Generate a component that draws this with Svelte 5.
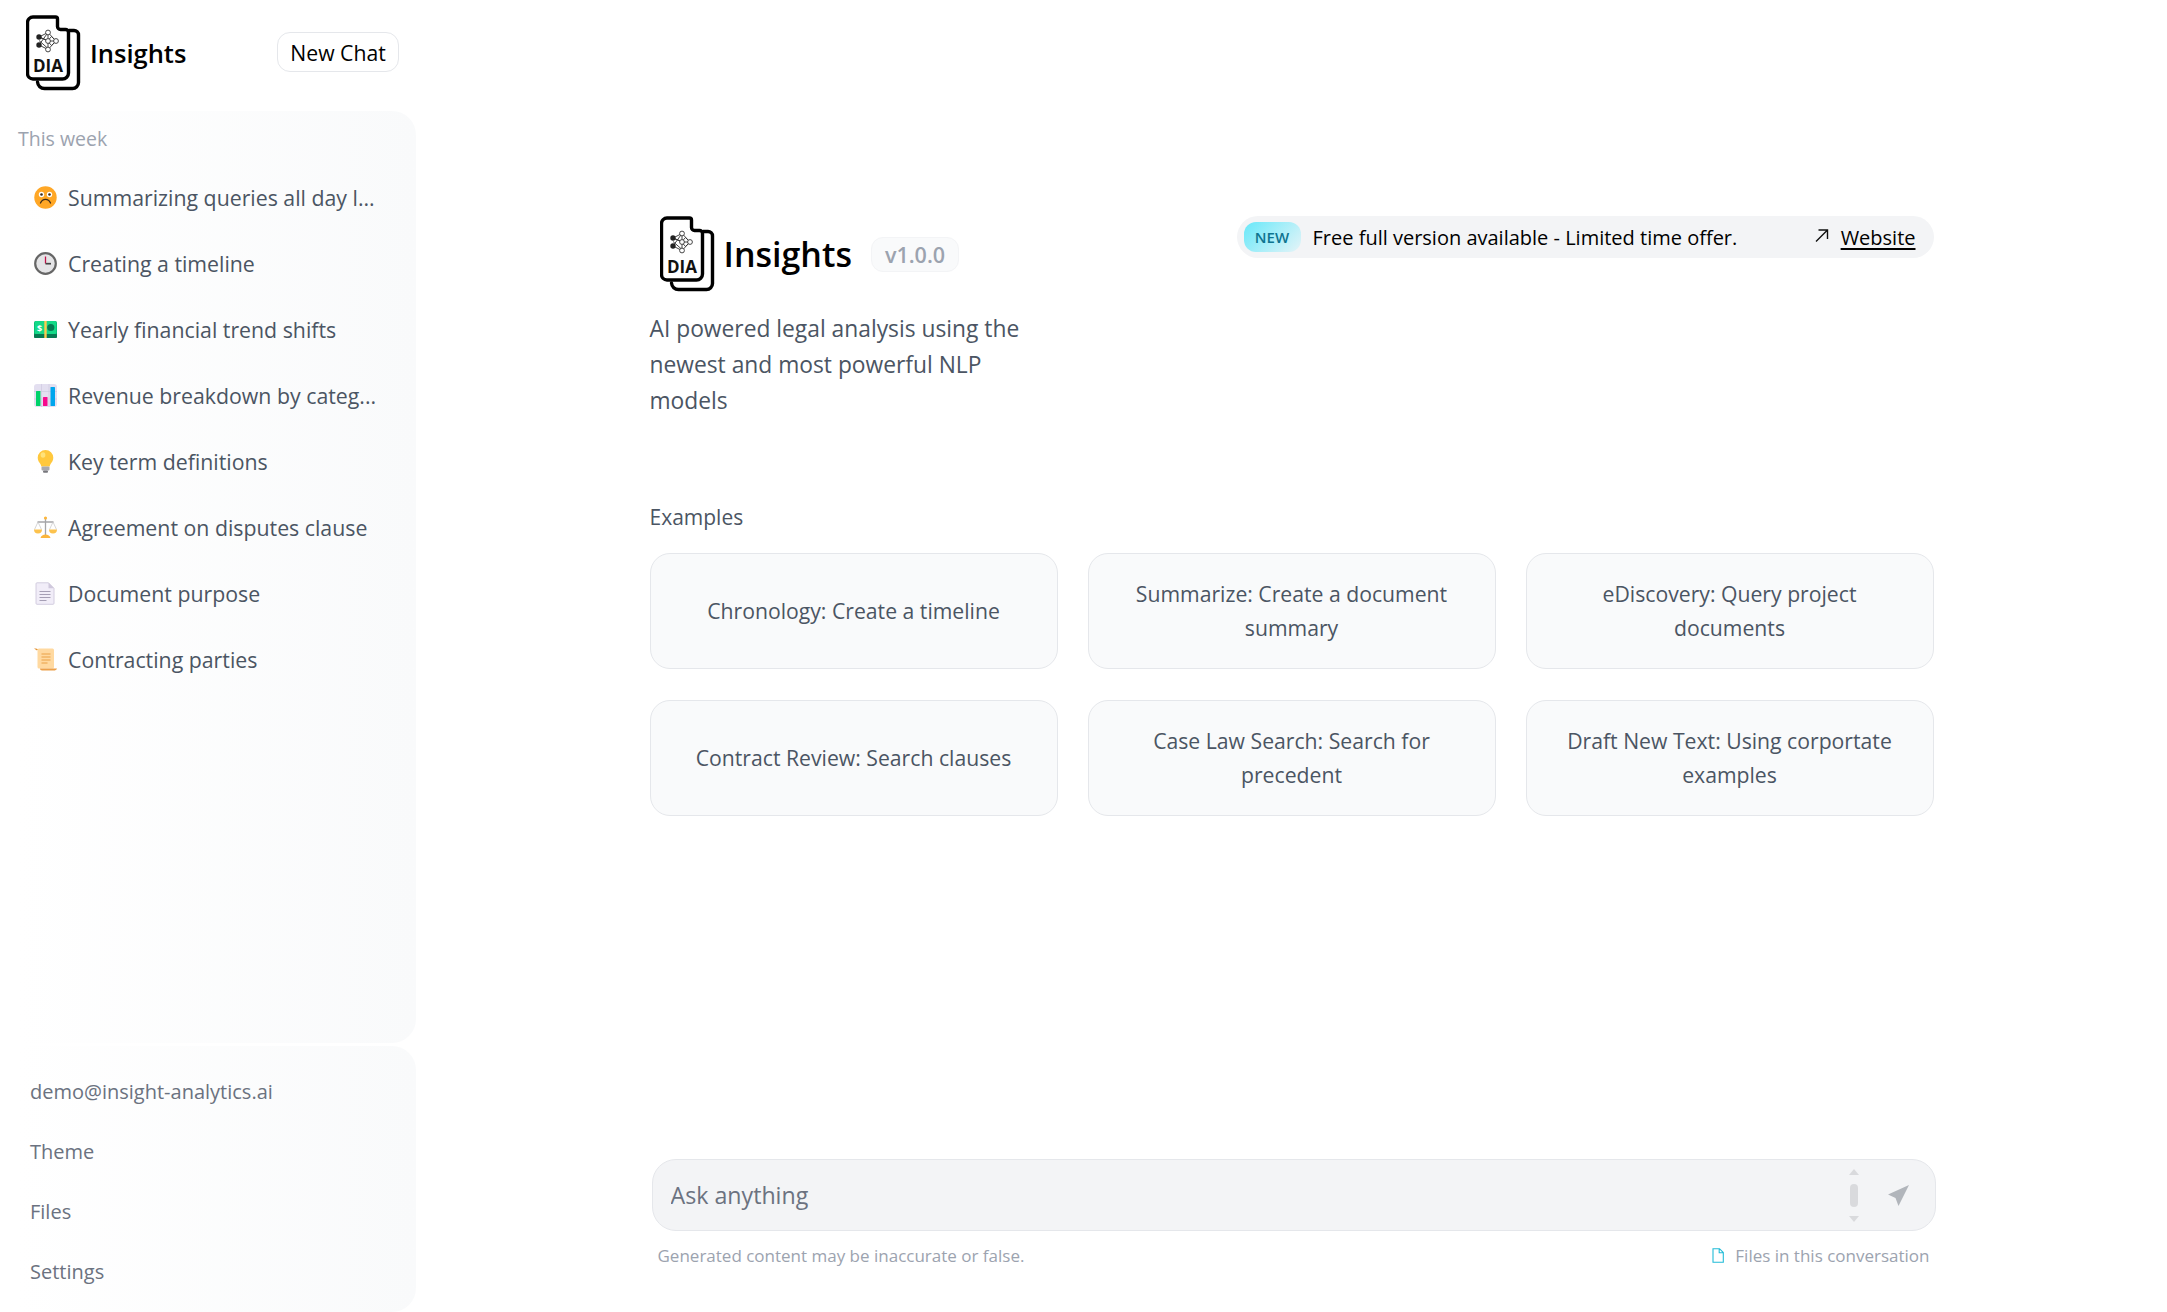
<script>
  const chats = [
    { icon: 'frown', label: 'Summarizing queries all day l...' },
    { icon: 'clock', label: 'Creating a timeline' },
    { icon: 'money', label: 'Yearly financial trend shifts' },
    { icon: 'chart', label: 'Revenue breakdown by categ...' },
    { icon: 'bulb', label: 'Key term definitions' },
    { icon: 'scales', label: 'Agreement on disputes clause' },
    { icon: 'page', label: 'Document purpose' },
    { icon: 'scroll', label: 'Contracting parties' }
  ]

  const examples = [
    'Chronology: Create a timeline',
    'Summarize: Create a document summary',
    'eDiscovery: Query project documents',
    'Contract Review: Search clauses',
    'Case Law Search: Search for precedent',
    'Draft New Text: Using corportate examples'
  ]

  const accountLinks = ['demo@insight-analytics.ai', 'Theme', 'Files', 'Settings']
</script>

{#snippet logo()}
  <svg class="logo" viewBox="0 0 56 76" aria-hidden="true">
    <path d="M43 15.5h5a4.500 4.500 0 0 1 4.500 4.500V67.500a6 6 0 0 1-6 6H18.500a7 7 0 0 1-7-6.500" fill="none" stroke="#000" stroke-width="3.400" stroke-linecap="round" />
    <path d="M7 2h22.500a2 2 0 0 1 2 2v7.500a3 3 0 0 0 3 3h5a3 3 0 0 1 3 3V58a6 6 0 0 1-6 6H7a5.500 5.500 0 0 1-5.500-5.500V7.500A5.500 5.500 0 0 1 7 2z" fill="#fff" stroke="#000" stroke-width="3.400" stroke-linejoin="round" />
    <g fill="none" stroke="#333" stroke-width="0.900">
      <path d="M13 22l9-4.500 0 8-9-3.500 9 4 0 7.500-9-8M13 30l9-12.500M13 30l9 4.500M22 17.500l8 8.500-8 8.500M22 26h8M25.500 21.500l4.500 4.500-4.500 4.500-4-4.500z" />
      <circle cx="22" cy="17.500" r="2.400" fill="#fff" />
      <circle cx="22" cy="26" r="2.400" fill="#fff" />
      <circle cx="22" cy="34.500" r="2.400" fill="#fff" />
      <circle cx="30" cy="26" r="2.400" fill="#fff" />
    </g>
    <circle cx="13" cy="22" r="2.700" fill="#222" />
    <circle cx="13" cy="30" r="2.700" fill="#222" />
    <text x="22" y="57" text-anchor="middle" class="logo-text">DIA</text>
  </svg>
{/snippet}

{#snippet chatIcon(name)}
  <svg class="chat-icon" viewBox="0 0 23 23" aria-hidden="true">
    {#if name === 'frown'}
      <circle cx="11.500" cy="11.500" r="11.200" fill="#ffa726" />
      <circle cx="7.500" cy="8.500" r="2.700" fill="#fff" />
      <circle cx="15.500" cy="8.500" r="2.700" fill="#fff" />
      <circle cx="7.500" cy="8.500" r="1.300" fill="#3a2a1a" />
      <circle cx="15.500" cy="8.500" r="1.300" fill="#3a2a1a" />
      <path d="M6.500 17c1.200-2.600 3-3.600 5-3.600s3.800 1 5 3.600" fill="none" stroke="#3a2a1a" stroke-width="1.300" stroke-linecap="round" />
    {:else if name === 'clock'}
      <circle cx="11.500" cy="11.500" r="10.300" fill="#e4e4e6" stroke="#666" stroke-width="2.200" />
      <path d="M11.500 4.500v7" stroke="#c2124a" stroke-width="1.300" />
      <path d="M11.500 11.700h5.500" stroke="#444" stroke-width="1.700" />
    {:else if name === 'money'}
      <rect x="0" y="3" width="23" height="17" rx="2" fill="#00a86b" />
      <rect x="0.500" y="3" width="22" height="13" rx="1.500" fill="#13d987" />
      <rect x="0" y="16" width="23" height="4" rx="1" fill="#067a52" />
      <rect x="10.300" y="3" width="2.400" height="17" fill="#fdc94f" />
      <text x="5.500" y="14" text-anchor="middle" class="dollar">$</text>
      <circle cx="16.800" cy="9.500" r="3.600" fill="#067a52" />
    {:else if name === 'chart'}
      <rect x="0" y="0" width="23" height="23" rx="3" fill="#e3dff0" />
      <path d="M0 7.500h23M0 15h23M7.500 0v23M15 0v23" stroke="#cec8df" stroke-width="0.700" />
      <rect x="2" y="7" width="4.500" height="15" rx="0.500" fill="#00d26a" />
      <rect x="9" y="13" width="4.500" height="9" rx="0.500" fill="#f70a8d" />
      <rect x="16.500" y="3" width="4.500" height="19" rx="0.500" fill="#00a6ed" />
    {:else if name === 'bulb'}
      <path d="M11.500 0a7.800 7.800 0 0 0-7.800 7.800c0 3 1.700 4.600 2.700 6.200.6 1 .8 2 .8 2.500h8.600c0-.5.200-1.500.8-2.500 1-1.600 2.700-3.200 2.700-6.200A7.800 7.800 0 0 0 11.500 0z" fill="#ffc83d" />
      <ellipse cx="9" cy="5" rx="2.400" ry="2.800" fill="#ffe27a" />
      <rect x="7.500" y="16.500" width="8" height="4" rx="1" fill="#a9a9ad" />
      <rect x="9" y="20.500" width="5" height="2.200" rx="1" fill="#77777c" />
    {:else if name === 'scales'}
      <path d="M11.500 1v18M3.500 6h16" stroke="#a5a5a8" stroke-width="1.300" />
      <path d="M4 6l-3.500 7.500M4 6l3.500 7.500M19 6l-3.500 7.500M19 6l3.500 7.500" stroke="#c4c4c6" stroke-width="0.700" fill="none" />
      <circle cx="11.500" cy="2" r="1.600" fill="#fcb63c" />
      <path d="M0 13.500h8a4 4 0 0 1-8 0zM15 13.500h8a4 4 0 0 1-8 0z" fill="#fcc24d" />
      <path d="M6.500 22c.5-2.200 2.500-3.500 5-3.500s4.500 1.300 5 3.500z" fill="#fcb63c" />
    {:else if name === 'page'}
      <path d="M3 .8h11.500L20 6.300v15a1 1 0 0 1-1 1H3a1 1 0 0 1-1-1V1.800a1 1 0 0 1 1-1z" fill="#f1edf8" stroke="#cfc8dc" stroke-width="0.900" />
      <path d="M14.500.8v5.500H20z" fill="#cfc8dc" />
      <path d="M5.500 9.500h11M5.500 12.500h11M5.500 15.500h11M5.500 18.500h7" stroke="#9d96ad" stroke-width="0.900" />
    {:else if name === 'scroll'}
      <path d="M0 .6c1.500-.4 3-.2 4 .6L3 2.400z" fill="#e28f2e" />
      <rect x="3.500" y="0.500" width="16.500" height="20" rx="1.500" fill="#ffd9a0" />
      <path d="M7.500 6h9M7.500 9h9M7.500 12h9M7.500 15h6" stroke="#e89b3c" stroke-width="0.900" />
      <path d="M6 20.500h17c-.5 1.500-1.800 2-3 2H8c-1.200 0-2-.8-2-2z" fill="#eca04a" />
    {/if}
  </svg>
{/snippet}

<div class="shell">
  <aside class="sidebar">
    <header class="sidebar-top">
      <div class="brand">
        {@render logo()}
        <span class="brand-name">Insights</span>
      </div>
      <button type="button" class="new-chat">New Chat</button>
    </header>

    <section class="panel history">
      <h2 class="history-label">This week</h2>
      <ul class="chat-list">
        {#each chats as chat}
          <li class="chat-item">
            {@render chatIcon(chat.icon)}
            <span>{chat.label}</span>
          </li>
        {/each}
      </ul>
    </section>

    <nav class="panel account">
      {#each accountLinks as link}
        <span class="account-link">{link}</span>
      {/each}
    </nav>
  </aside>

  <main class="main">
    <div class="content">
      <div class="intro">
        <div class="intro-copy">
          <div class="title-row">
            {@render logo()}
            <h1 class="title">Insights</h1>
            <span class="version">v1.0.0</span>
          </div>
          <p class="tagline">AI powered legal analysis using the newest and most powerful NLP models</p>
        </div>

        <div class="banner">
          <span class="badge">NEW</span>
          <span class="banner-text">Free full version available - Limited time offer.</span>
          <svg class="banner-arrow" viewBox="0 0 15 15" aria-hidden="true">
            <path d="M2 13.500L13 2.500M4.500 2h9v9" fill="none" stroke="#111" stroke-width="1.400" />
          </svg>
          <span class="banner-link">Website</span>
        </div>
      </div>

      <h2 class="examples-label">Examples</h2>
      <div class="examples">
        {#each examples as example}
          <button type="button" class="example">{example}</button>
        {/each}
      </div>
    </div>

    <footer class="composer">
      <div class="input-box">
        <input class="prompt" type="text" placeholder="Ask anything" />
        <div class="scrollbar" aria-hidden="true">
          <span class="arrow-up"></span>
          <span class="thumb"></span>
          <span class="arrow-down"></span>
        </div>
        <svg class="send" viewBox="0 0 21 21" aria-hidden="true">
          <path d="M21 0L0 9.500l7.500 3.500 3 8z" fill="#b1b5bb" />
        </svg>
      </div>
      <div class="notes">
        <span>Generated content may be inaccurate or false.</span>
        <span class="files">
          <svg class="file-icon" viewBox="0 0 12 15" aria-hidden="true">
            <path d="M1 .7h6.500L11.300 4.500v9.800H1zM7.200.7v4h4.100" fill="none" stroke="#22bcd8" stroke-width="1.100" />
          </svg>
          Files in this conversation
        </span>
      </div>
    </footer>
  </main>
</div>

<style>
  :global(body) {
    margin: 0;
    background: #fff;
    overflow: hidden;
  }

  .shell {
    display: grid;
    grid-template-columns: 416px 1fr;
    height: 100vh;
    font-family: "Open Sans", "Noto Sans", sans-serif;
    color: #4b5563;
  }

  .sidebar {
    display: flex;
    flex-direction: column;
    min-height: 0;
  }

  .sidebar-top {
    display: flex;
    align-items: flex-start;
    justify-content: space-between;
    height: 111px;
    padding: 15px 17px 0 26px;
    box-sizing: border-box;
  }

  .brand {
    display: flex;
    align-items: center;
    gap: 8px;
  }

  .logo {
    display: block;
    width: 56px;
    height: 76px;
    flex: none;
  }

  .logo-text {
    font: 700 17px "Open Sans", sans-serif;
    fill: #111;
  }

  .brand-name {
    font-size: 25.500px;
    font-weight: 600;
    color: #000;
  }

  .new-chat {
    margin-top: 17px;
    height: 40px;
    width: 122px;
    padding: 0;
    border: 1px solid #e5e7eb;
    border-radius: 13px;
    background: #fff;
    font: inherit;
    font-size: 21.200px;
    color: #000;
  }

  .panel {
    margin-left: 18px;
    background: linear-gradient(to right, #fff, #f9fafb);
    border-radius: 0 24px 24px 0;
  }

  .history {
    flex: 1;
    padding-top: 13px;
    min-height: 0;
  }

  .history-label {
    margin: 0 0 10px;
    font-size: 19.500px;
    font-weight: 400;
    line-height: 30px;
    color: #9ca3af;
  }

  .chat-list {
    margin: 0;
    padding: 0 0 0 16px;
    list-style: none;
  }

  .chat-item {
    display: flex;
    align-items: center;
    gap: 11px;
    height: 66px;
    font-size: 21.300px;
    white-space: nowrap;
  }

  .chat-icon {
    width: 23px;
    height: 23px;
    flex: none;
  }

  .dollar {
    font: 700 9px "Open Sans", sans-serif;
    fill: #fff;
  }

  .account {
    display: flex;
    flex-direction: column;
    margin-top: 3px;
    padding: 15px 0 11px 12px;
    font-size: 20px;
    color: #6b7280;
  }

  .account-link {
    display: flex;
    align-items: center;
    height: 60px;
  }

  .main {
    display: flex;
    flex-direction: column;
    min-width: 0;
    align-items: center;
  }

  .content {
    width: 1284px;
    padding-top: 216px;
    flex: 1;
  }

  .intro {
    display: flex;
    justify-content: space-between;
    align-items: flex-start;
  }

  .intro-copy {
    width: 410px;
  }

  .title-row {
    display: flex;
    align-items: center;
    padding-left: 10px;
  }

  .title {
    margin: 0 0 0 8px;
    font-size: 34px;
    font-weight: 600;
    color: #000;
  }

  .version {
    margin-left: 19px;
    padding: 0 13px;
    height: 35px;
    line-height: 33px;
    box-sizing: border-box;
    border: 1px solid #f3f4f6;
    border-radius: 12px;
    background: #f9fafb;
    font-size: 21.500px;
    font-weight: 600;
    color: #9ca3af;
  }

  .tagline {
    margin: 19px 0 0;
    font-size: 22.800px;
    line-height: 36px;
  }

  .banner {
    display: flex;
    align-items: center;
    width: 697px;
    height: 42px;
    box-sizing: border-box;
    padding: 0 18px 0 7px;
    border-radius: 21px;
    background: #f3f4f6;
    color: #000;
    font-size: 20px;
    white-space: nowrap;
  }

  .badge {
    width: 57px;
    height: 30px;
    line-height: 30px;
    text-align: center;
    border-radius: 12px;
    background: linear-gradient(135deg, #67e8f9, #e6f4f8);
    font-size: 15px;
    font-weight: 600;
    color: #0e7490;
  }

  .banner-text {
    margin-left: 12px;
  }

  .banner-arrow {
    width: 15px;
    height: 15px;
    margin-left: auto;
    margin-right: 12px;
    margin-top: -4px;
  }

  .banner-link {
    text-decoration: underline;
    text-underline-offset: 3px;
  }

  .examples-label {
    margin: 80px 0 17px;
    font-size: 21px;
    font-weight: 400;
    line-height: 36px;
  }

  .examples {
    display: grid;
    grid-template-columns: repeat(3, 408px);
    grid-auto-rows: 116px;
    justify-content: space-between;
    row-gap: 31px;
    margin-top: 18px;
  }

  .example {
    padding: 0 28px;
    border: 1px solid #e5e7eb;
    border-radius: 20px;
    background: #f9fafb;
    font: inherit;
    font-size: 21.200px;
    line-height: 34px;
    color: #4b5563;
  }

  .composer {
    width: 1284px;
    margin-left: 4px;
    padding-bottom: 45px;
  }

  .input-box {
    display: flex;
    align-items: center;
    height: 72px;
    box-sizing: border-box;
    padding: 0 26px 0 18px;
    border: 1px solid #e5e7eb;
    border-radius: 24px;
    background: #f3f4f6;
  }

  .prompt {
    flex: 1;
    min-width: 0;
    padding: 0;
    border: 0;
    outline: 0;
    background: transparent;
    font: inherit;
    font-size: 23.200px;
  }

  .prompt::placeholder {
    color: #6b7280;
    opacity: 1;
  }

  .scrollbar {
    display: flex;
    flex-direction: column;
    align-items: center;
    gap: 9px;
    width: 10px;
    margin-right: 29px;
  }

  .arrow-up,
  .arrow-down {
    border-left: 5px solid transparent;
    border-right: 5px solid transparent;
  }

  .arrow-up {
    border-bottom: 6px solid #d9dadd;
  }

  .arrow-down {
    border-top: 6px solid #d9dadd;
  }

  .thumb {
    width: 8px;
    height: 23px;
    border-radius: 4px;
    background: #d9dadd;
  }

  .send {
    width: 21px;
    height: 21px;
    flex: none;
  }

  .notes {
    display: flex;
    justify-content: space-between;
    align-items: center;
    margin-top: 12px;
    padding: 0 6px;
    height: 24px;
    font-size: 17px;
    color: #9ca3af;
  }

  .files {
    display: flex;
    align-items: center;
    gap: 11px;
  }

  .file-icon {
    width: 12px;
    height: 15px;
  }
</style>
